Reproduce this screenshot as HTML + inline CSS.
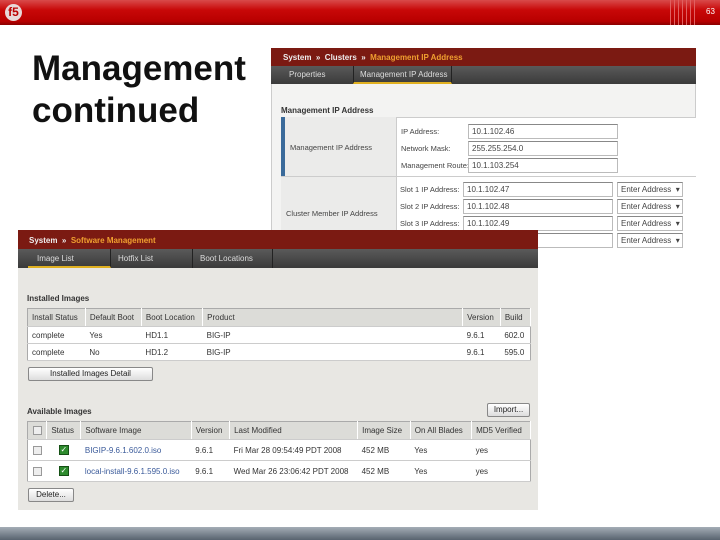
<!DOCTYPE html>
<html><head><meta charset="utf-8"><style>
*{margin:0;padding:0;box-sizing:border-box}
body{width:720px;height:540px;background:#fff;position:relative;overflow:hidden;font-family:"Liberation Sans",sans-serif}
.a{position:absolute}
.t{font-size:8px;color:#333;white-space:nowrap}
.s{font-size:7.5px}
.inp{position:absolute;background:#fff;border:1px solid #bbb;border-top-color:#888;font-size:8px;color:#444;padding-left:3px;line-height:13px;height:15px}
table{border-collapse:collapse;font-size:8px;color:#333}
td{padding:0 4px;white-space:nowrap;height:17px;border-bottom:1px solid #ccc}
.hd td{background:#dcdcd8;border-right:1px solid #fff;height:18px}
.btn{position:absolute;background:linear-gradient(#fff,#ddd);border:1px solid #888;font-size:8px;color:#222;text-align:center;line-height:12px;height:14px;border-radius:2px}
.cb{display:inline-block;width:9px;height:9px;border:1px solid #999;background:#eee;vertical-align:middle}
.gk{display:inline-block;width:10px;height:10px;background:#2e8b2e;border:1px solid #155015;color:#fff;font-size:8px;line-height:8px;text-align:center;vertical-align:middle}
</style></head><body>
<div class="a" style="left:0;top:0;width:720px;height:25px;background:linear-gradient(#d94a4a 0%,#c80808 40%,#b80000 85%,#8a0000 100%)"></div>
<div class="a" style="left:5px;top:4px;width:17px;height:17px;border-radius:50%;background:#e8d8d8;color:#b00;font:bold 12px/17px 'Liberation Sans',sans-serif;text-align:center">f5</div>
<div class="a" style="left:670px;top:0;width:26px;height:25px;background:repeating-linear-gradient(90deg,#e06060 0 1px,transparent 1px 4px)"></div>
<div class="a" style="left:706px;top:7px;font-size:8px;color:#fff">63</div>

<div class="a" style="left:32px;top:48px;font:bold 35px/42px 'Liberation Sans',sans-serif;color:#111">Management<br>continued</div>

<div class="a" style="left:271px;top:48px;width:425px;height:207px;background:#f3f3f2;border:1px solid #ccc"></div>
<div class="a" style="left:271px;top:48px;width:425px;height:18px;background:#7b1a12"></div>
<div class="a t" style="left:283px;top:53px;color:#eee;font-weight:bold">System &nbsp;» &nbsp;Clusters &nbsp;» &nbsp;<span style="color:#f0a030">Management IP Address</span></div>
<div class="a" style="left:271px;top:66px;width:425px;height:18px;background:linear-gradient(#5a5a5a,#3a3a3a)"></div>
<div class="a t" style="left:289px;top:70px;color:#ddd">Properties</div>
<div class="a" style="left:353px;top:66px;width:99px;height:18px;border-left:1px solid #222;border-right:1px solid #222;border-bottom:2px solid #e0b020"></div>
<div class="a t" style="left:360px;top:70px;color:#ddd">Management IP Address</div>
<div class="a t" style="left:281px;top:106px;font-weight:bold">Management IP Address</div>
<div class="a" style="left:281px;top:117px;width:415px;height:138px;background:#fff;border-top:1px solid #ccc"></div>
<div class="a" style="left:281px;top:117px;width:116px;height:138px;background:#ebebea;border-right:1px solid #ccc"></div>
<div class="a" style="left:281px;top:117px;width:4px;height:59px;background:#3a6a9a"></div>
<div class="a" style="left:281px;top:176px;width:415px;height:1px;background:#ccc"></div>
<div class="a t s" style="left:290px;top:143px;color:#444">Management IP Address</div>
<div class="a t s" style="left:286px;top:209px;color:#444">Cluster Member IP Address</div>
<div class="a t s" style="left:401px;top:127px;color:#444">IP Address:</div>
<div class="a t s" style="left:401px;top:144px;color:#444">Network Mask:</div>
<div class="a t s" style="left:401px;top:161px;color:#444">Management Route:</div>
<div class="inp" style="left:468px;top:124px;width:150px">10.1.102.46</div>
<div class="inp" style="left:468px;top:141px;width:150px">255.255.254.0</div>
<div class="inp" style="left:468px;top:158px;width:150px">10.1.103.254</div>
<div class="a t s" style="left:400px;top:185px;color:#444">Slot 1 IP Address:</div>
<div class="a t s" style="left:400px;top:202px;color:#444">Slot 2 IP Address:</div>
<div class="a t s" style="left:400px;top:219px;color:#444">Slot 3 IP Address:</div>
<div class="inp" style="left:463px;top:182px;width:150px">10.1.102.47</div>
<div class="inp" style="left:463px;top:199px;width:150px">10.1.102.48</div>
<div class="inp" style="left:463px;top:216px;width:150px">10.1.102.49</div>
<div class="inp" style="left:463px;top:233px;width:150px"></div>
<div class="inp" style="left:617px;top:182px;width:66px">Enter Address &nbsp;▾</div>
<div class="inp" style="left:617px;top:199px;width:66px">Enter Address &nbsp;▾</div>
<div class="inp" style="left:617px;top:216px;width:66px">Enter Address &nbsp;▾</div>
<div class="inp" style="left:617px;top:233px;width:66px">Enter Address &nbsp;▾</div>

<div class="a" style="left:18px;top:230px;width:520px;height:280px;background:#e8e7e3"></div>
<div class="a" style="left:18px;top:230px;width:520px;height:19px;background:#7b1a12"></div>
<div class="a t" style="left:29px;top:236px;color:#eee;font-weight:bold">System &nbsp;» &nbsp;<span style="color:#f0a030">Software Management</span></div>
<div class="a" style="left:18px;top:249px;width:520px;height:19px;background:linear-gradient(#5a5a5a,#3a3a3a)"></div>
<div class="a" style="left:28px;top:249px;width:83px;height:19px;border-bottom:2px solid #e0b020;border-right:1px solid #222"></div>
<div class="a" style="left:111px;top:249px;width:82px;height:19px;border-right:1px solid #222"></div>
<div class="a" style="left:193px;top:249px;width:80px;height:19px;border-right:1px solid #222"></div>
<div class="a t" style="left:37px;top:254px;color:#ddd">Image List</div>
<div class="a t" style="left:118px;top:254px;color:#ddd">Hotfix List</div>
<div class="a t" style="left:200px;top:254px;color:#ddd">Boot Locations</div>
<div class="a t" style="left:27px;top:294px;font-weight:bold">Installed Images</div>
<table class="a" style="left:27px;top:308px;width:504px;border:1px solid #aaa;background:#fff">
<tr class="hd"><td>Install Status</td><td>Default Boot</td><td>Boot Location</td><td style="width:260px">Product</td><td>Version</td><td>Build</td></tr>
<tr><td>complete</td><td>Yes</td><td>HD1.1</td><td>BIG-IP</td><td>9.6.1</td><td>602.0</td></tr>
<tr><td>complete</td><td>No</td><td>HD1.2</td><td>BIG-IP</td><td>9.6.1</td><td>595.0</td></tr>
</table>
<div class="btn" style="left:28px;top:367px;width:125px">Installed Images Detail</div>
<div class="a t" style="left:27px;top:407px;font-weight:bold">Available Images</div>
<div class="btn" style="left:487px;top:403px;width:43px">Import...</div>
<table class="a" style="left:27px;top:421px;width:504px;border:1px solid #aaa;background:#fff">
<tr class="hd"><td style="text-align:center"><span class="cb"></span></td><td>Status</td><td>Software Image</td><td>Version</td><td style="width:128px">Last Modified</td><td>Image Size</td><td>On All Blades</td><td>MD5 Verified</td></tr>
<tr style="height:21px"><td style="text-align:center;height:21px"><span class="cb"></span></td><td style="text-align:center"><span class="gk">✓</span></td><td style="color:#3a5a9a">BIGIP-9.6.1.602.0.iso</td><td>9.6.1</td><td>Fri Mar 28 09:54:49 PDT 2008</td><td>452 MB</td><td>Yes</td><td>yes</td></tr>
<tr><td style="text-align:center;height:21px"><span class="cb"></span></td><td style="text-align:center"><span class="gk">✓</span></td><td style="color:#3a5a9a">local-install-9.6.1.595.0.iso</td><td>9.6.1</td><td>Wed Mar 26 23:06:42 PDT 2008</td><td>452 MB</td><td>Yes</td><td>yes</td></tr>
</table>
<div class="btn" style="left:28px;top:488px;width:46px">Delete...</div>

<div class="a" style="left:0;top:527px;width:720px;height:13px;background:linear-gradient(#a4adb6,#58636f)"></div>
</body></html>
